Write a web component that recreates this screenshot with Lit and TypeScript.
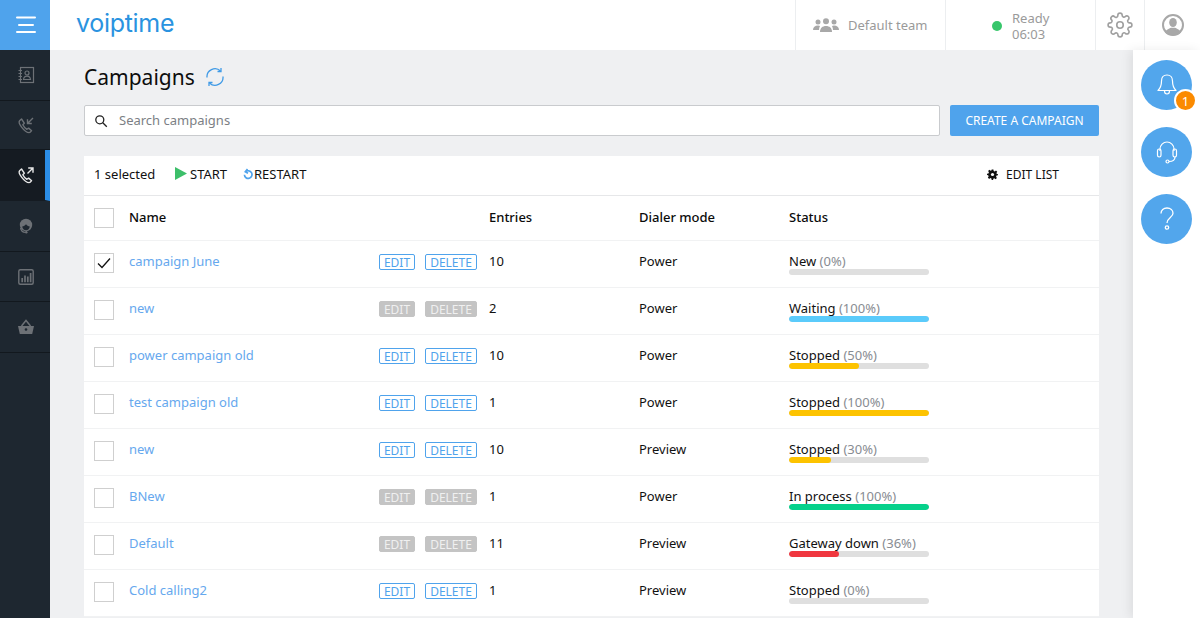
import { LitElement, html, css, svg } from "lit";
import { customElement } from "lit/decorators.js";

type Row = { name: string; on: boolean; sel?: boolean; entries: string; mode: string; status: string; pct: number; color: string };
const ROWS: Row[] = [
  { name: "campaign June", on: true, sel: true, entries: "10", mode: "Power", status: "New", pct: 0, color: "#ddd" },
  { name: "new", on: false, entries: "2", mode: "Power", status: "Waiting", pct: 100, color: "#5bcbfb" },
  { name: "power campaign old", on: true, entries: "10", mode: "Power", status: "Stopped", pct: 50, color: "#fdc300" },
  { name: "test campaign old", on: true, entries: "1", mode: "Power", status: "Stopped", pct: 100, color: "#fdc300" },
  { name: "new", on: true, entries: "10", mode: "Preview", status: "Stopped", pct: 30, color: "#fdc300" },
  { name: "BNew", on: false, entries: "1", mode: "Power", status: "In process", pct: 100, color: "#06d18b" },
  { name: "Default", on: false, entries: "11", mode: "Preview", status: "Gateway down", pct: 36, color: "#f0373f" },
  { name: "Cold calling2", on: true, entries: "1", mode: "Preview", status: "Stopped", pct: 0, color: "#ddd" },
];

const phone = svg`<path d="M4.500 3 2.600 4.700c-.9 1-.4 3.300 2 6.400 2.500 3.300 5.600 5.500 7.500 5.500 1 0 1.800-.9 2.500-1.900l-3-2.600-1.700 1.200C8.300 12.300 6.800 10.700 5.800 8.700l1.500-1.500z" fill="none" stroke="currentColor" stroke-width="1.400" stroke-linejoin="round"/>`;

const NAV = [
  svg`<svg viewBox="0 0 18 18" width="18" height="18" fill="none" stroke="currentColor" stroke-width="1.200"><rect x="3.500" y="1.500" width="13" height="15"/><path d="M1.500 4.500h3.500M1.500 7.500h3.500M1.500 10.500h3.500M1.500 13.500h3.500"/><circle cx="10" cy="7" r="2"/><path d="M6.500 13.500c.3-2.500 1.700-3.300 3.500-3.300s3.200.8 3.500 3.300z"/></svg>`,
  svg`<svg viewBox="0 0 18 18" width="18" height="18">${phone}<path d="M16 2 10.500 7.500M10.500 3.200v4.300h4.300" fill="none" stroke="currentColor" stroke-width="1.400"/></svg>`,
  svg`<svg viewBox="0 0 18 18" width="18" height="18">${phone}<path d="M10.500 7.500 16 2M11.200 2H16v4.800" fill="none" stroke="currentColor" stroke-width="1.400"/></svg>`,
  svg`<svg viewBox="0 0 18 18" width="18" height="18"><circle cx="9" cy="8" r="6.200" fill="currentColor"/><path d="M5.200 9.500c1.500 0 3-1 3.800-2.200.8 1.200 2.200 2.200 3.800 2.200-.3 2.400-1.800 3.800-3.800 3.800s-3.500-1.400-3.800-3.800z" fill="#1e2730"/><path d="M3.500 11c.6 2.700 2.500 4.400 5 4.400" fill="none" stroke="currentColor" stroke-width="1.200"/><circle cx="9.300" cy="15.300" r="1.200" fill="currentColor"/></svg>`,
  svg`<svg viewBox="0 0 18 18" width="18" height="18" fill="none" stroke="currentColor"><rect x="1.800" y="1.800" width="14.400" height="14.400" rx="1.500" stroke-width="1.400"/><path d="M5.200 14.200V10M8 14.200V7.500M10.800 14.200V8.500M13.600 14.200V5" stroke-width="1.700"/></svg>`,
  svg`<svg viewBox="0 0 18 18" width="18" height="18"><path d="M1 8h16l-1.800 8H2.800z" fill="currentColor"/><path d="M4.500 8 9 2.500 13.500 8" fill="none" stroke="currentColor" stroke-width="1.500"/><circle cx="9" cy="11.500" r="1.300" fill="#1e2730"/></svg>`,
];
const NAV_H = [51, 49, 51, 51, 50, 51];

@customElement("app-root")
export class AppRoot extends LitElement {
  static styles = css`
    :host { display: block; height: 100vh; overflow: hidden; background: #eff0f2; font-family: "Noto Sans", "Open Sans", sans-serif; font-size: 13px; color: #111; }
    .app { display: grid; grid-template-columns: 50px 1fr; grid-template-rows: 50px 1fr; height: 618px; overflow: hidden; }
    .burger { background: #4fa3ec; display: flex; align-items: center; justify-content: center; padding-left: 2px; }
    .top { background: #fff; display: flex; align-items: stretch; box-sizing: border-box; }
    .logo { font-family: Inter, sans-serif; font-weight: 400; font-size: 25px; line-height: 47px; color: #2a93e0; margin-left: 26px; margin-right: auto; letter-spacing: -.3px; }
    .cell { display: flex; align-items: center; border-left: 1px solid #eceef0; color: #9a9a9a; box-sizing: border-box; }
    .team { width: 150px; padding-left: 17px; gap: 9px; }
    .ready { width: 150px; padding-left: 46px; gap: 10px; line-height: 16px; }
    .rtext { padding-top: 2px; }
    .dot { width: 10px; height: 10px; border-radius: 50%; background: #37c66b; margin-top: 1px; }
    .gear { width: 49px; justify-content: center; }
    .user { width: 56px; justify-content: center; }
    .side { background: #1e2730; display: flex; flex-direction: column; }
    .nav { box-sizing: border-box; flex: none; border-bottom: 1px solid #12181e; display: flex; align-items: center; justify-content: center; color: #6d7176; padding-left: 2px; }
    .nav.active { background: #151b22; color: #e8e8e8; border-right: 5px solid #2b8de6; padding-left: 7px; border-bottom-color: #151b22; }
    .body { display: grid; grid-template-columns: 1fr 67px; min-height: 0; }
    .main { padding: 13px 34px 0; min-width: 0; overflow: hidden; }
    .title { display: flex; align-items: center; gap: 10px; height: 28px; font-size: 21px; color: #0d0d0d; line-height: 28px; }
    .tools { display: flex; gap: 10px; margin-top: 14px; }
    .search { flex: 1; height: 31px; box-sizing: border-box; background: #fff; border: 1px solid #c9cbce; border-radius: 2px; display: flex; align-items: center; gap: 11px; padding: 0 0 2px 9px; color: #7c7f85; }
    .create { width: 149px; height: 31px; background: #4fa3ec; color: #fff; border-radius: 2px; display: flex; align-items: center; justify-content: center; font-size: 12px; }
    .card { background: #fff; margin-top: 20px; }
    .bar { height: 40px; box-sizing: border-box; border-bottom: 1px solid #e6e7e9; display: flex; align-items: center; padding-left: 10px; padding-bottom: 2px; color: #111; font-size: 13px; }
    .sel { width: 81px; padding-bottom: 2px; }
    .act { display: flex; align-items: center; }
    .start { width: 68px; gap: 3px; padding-bottom: 2px; }
    .restart { gap: 1px; padding-bottom: 2px; }
    .editlist { margin-left: auto; margin-right: 40px; gap: 8px; font-size: 12px; }
    .row { display: grid; grid-template-columns: 35px 250px 110px 150px 150px 1fr; align-items: center; padding: 0 0 2px 10px; box-sizing: border-box; height: 47px; border-bottom: 1px solid #f1f2f3; }
    .row.head { height: 45px; padding-bottom: 1px; font-weight: 500; color: #0b0b0b; }
    .head .lbl { position: relative; top: -1px; }
    .box { width: 20px; height: 20px; box-sizing: border-box; border: 1px solid #cfcfcf; display: flex; align-items: center; justify-content: center; background: #fff; }
    .name { color: #66a8ee; position: relative; top: -2px; }
    .btns { display: flex; gap: 10px; position: relative; top: -1px; }
    .btn { height: 16px; box-sizing: border-box; border: 1px solid #4fa3ec; border-radius: 2px; color: #4fa3ec; font-size: 12px; line-height: 14px; display: flex; align-items: center; justify-content: center; padding-top: 2px; }
    .btn.off { background: #c4c4c4; border-color: #c4c4c4; color: #f0f0f0; }
    .b1 { width: 36px; }
    .b2 { width: 52px; }
    .cellv { position: relative; top: -2px; }
    .st { width: 140px; }
    .st-l { line-height: 20px; margin-bottom: -2px; white-space: nowrap; }
    .st-l span { color: #888c92; }
    .track { height: 6px; border-radius: 3px; background: #dfdfdf; overflow: hidden; }
    .fill { height: 100%; border-radius: 3px; }
    .right { background: #fff; box-shadow: -3px 0 10px rgba(0,0,0,.08); display: flex; flex-direction: column; align-items: center; padding-top: 10px; gap: 17px; position: relative; box-sizing: border-box; }
    .circle { width: 51px; height: 50px; flex: none; border-radius: 50%; background: #52a6ec; display: flex; align-items: center; justify-content: center; position: relative; color: #fff; }
    .badge { position: absolute; right: -5px; bottom: -2px; width: 23px; height: 23px; box-sizing: border-box; border-radius: 50%; background: #fb8a00; border: 2px solid #fff; color: #fff; font-size: 13px; display: flex; align-items: center; justify-content: center; }
  `;

  private row(r: Row) {
    return html`<div class="row">
      <div class="box">${r.sel ? html`<svg width="14" height="12" viewBox="0 0 14 12" fill="none" stroke="#111" stroke-width="1.300"><path d="M1 6.500 5 10.500 13 1.500"/></svg>` : ""}</div>
      <div class="name">${r.name}</div>
      <div class="btns"><div class="btn b1 ${r.on ? "" : "off"}">EDIT</div><div class="btn b2 ${r.on ? "" : "off"}">DELETE</div></div>
      <div class="cellv">${r.entries}</div>
      <div class="cellv">${r.mode}</div>
      <div class="st"><div class="st-l">${r.status} <span>(${r.pct}%)</span></div>
        <div class="track"><div class="fill" style="width:${r.pct}%;background:${r.color}"></div></div></div>
    </div>`;
  }

  render() {
    return html`<div class="app">
      <div class="burger"><svg width="20" height="18" viewBox="0 0 20 18" fill="none" stroke="#fff" stroke-width="2" stroke-linecap="round"><path d="M1 1.500h18M3 9h14M1 16h18"/></svg></div>
      <div class="top">
        <div class="logo">voiptime</div>
        <div class="cell team"><svg width="26" height="14" viewBox="0 0 26 14" fill="#a8a8a8"><circle cx="5" cy="4" r="2.500"/><circle cx="13" cy="3.200" r="3"/><circle cx="21" cy="4" r="2.500"/><path d="M0 12c0-3 2-4.500 5-4.500 1 0 1.500.2 2 .5-.7 1.200-1 2.500-1 4z"/><path d="M7 14c0-4 2.500-6 6-6s6 2 6 6z"/><path d="M26 12c0-3-2-4.500-5-4.500-1 0-1.500.2-2 .5.700 1.200 1 2.500 1 4z"/></svg><span>Default team</span></div>
        <div class="cell ready"><div class="dot"></div><div class="rtext">Ready<br />06:03</div></div>
        <div class="cell gear"><svg width="26" height="26" viewBox="0 0 24 24" fill="none" stroke="#a0a0a0" stroke-width="1.500" stroke-linejoin="round"><circle cx="12" cy="12" r="3"/><path d="M19.400 15a1.650 1.650 0 0 0 .33 1.820l.06.06a2 2 0 1 1-2.830 2.830l-.06-.06a1.650 1.650 0 0 0-2.820 1.170V21a2 2 0 0 1-4 0v-.09A1.650 1.650 0 0 0 7.270 19.740l-.06.06a2 2 0 1 1-2.830-2.830l.06-.06A1.650 1.650 0 0 0 3.270 14H3a2 2 0 0 1 0-4h.09A1.650 1.650 0 0 0 4.260 7.270l-.06-.06a2 2 0 1 1 2.830-2.830l.06.06A1.650 1.650 0 0 0 10 3.270V3a2 2 0 0 1 4 0v.09a1.650 1.650 0 0 0 2.820 1.170l.06-.06a2 2 0 1 1 2.830 2.830l-.06.06A1.650 1.650 0 0 0 20.910 10H21a2 2 0 0 1 0 4h-.09a1.650 1.650 0 0 0-1.510 1z"/></svg></div>
        <div class="cell user"><svg width="22" height="22" viewBox="0 0 22 22"><circle cx="11" cy="11" r="10" fill="none" stroke="#a8a8a8" stroke-width="2"/><ellipse cx="11" cy="8.500" rx="3.800" ry="4.600" fill="#a8a8a8"/><path d="M3 18.500c.8-3 4-3.800 6-4.800h4c2 1 5.200 1.800 6 4.800-2 2-4.800 3-8 3s-6-1-8-3z" fill="#a8a8a8"/></svg></div>
      </div>
      <div class="side">
        ${NAV.map((n, i) => html`<div class="nav ${i === 2 ? "active" : ""}" style="height:${NAV_H[i]}px">${n}</div>`)}
      </div>
      <div class="body">
        <div class="main">
          <div class="title"><span>Campaigns</span>
            <svg width="20" height="20" viewBox="0 0 20 20" fill="none" stroke="#3f9ae6" stroke-width="1.300"><path d="M2 10.500A8 8 0 0 1 15.500 4M18 9.500A8 8 0 0 1 4.500 16"/><path d="M16 1v3.500h-3.500M4 19v-3.500h3.500"/></svg>
          </div>
          <div class="tools">
            <div class="search"><svg width="14" height="14" viewBox="0 0 14 14" fill="none" stroke="#222" stroke-width="1.300" style="margin-top:2px"><circle cx="5.800" cy="5.800" r="4"/><path d="m8.800 8.800 4 4"/></svg><span>Search campaigns</span></div>
            <div class="create">CREATE A CAMPAIGN</div>
          </div>
          <div class="card">
            <div class="bar">
              <div class="sel">1 selected</div>
              <div class="act start"><svg width="12" height="13" viewBox="0 0 12 13"><path d="M0 0 12 6.500 0 13z" fill="#3dbf6a"/></svg>START</div>
              <div class="act restart"><svg width="10" height="12" viewBox="0 0 10 12" fill="none" stroke="#4fa3ec" stroke-width="1.700"><path d="M2.600 3.800a3.800 3.800 0 1 1-1.200 3M4.500 1 2.300 3.700 5 5.300"/></svg>RESTART</div>
              <div class="act editlist"><svg width="11" height="11" viewBox="0 0 24 24"><path d="M10 1h4l.6 3.200 2.300 1 2.700-1.800 2.800 2.800-1.800 2.700 1 2.300L24 10.800v3l-3.200.6-1 2.300 1.800 2.700-2.800 2.800-2.700-1.800-2.300 1L13.200 24h-3l-.6-3.200-2.300-1-2.700 1.800-2.800-2.800 1.800-2.700-1-2.300L0 13.200v-3l3.200-.6 1-2.300L2.400 4.600l2.800-2.800 2.700 1.800 2.300-1z" fill="#111"/><circle cx="12" cy="12" r="3.500" fill="#fff"/></svg>EDIT LIST</div>
            </div>
            <div class="row head"><div class="box"></div><div class="lbl">Name</div><div></div><div class="lbl">Entries</div><div class="lbl">Dialer mode</div><div class="lbl">Status</div></div>
            ${ROWS.map((r) => this.row(r))}
          </div>
        </div>
        <div class="right">
          <div class="circle"><svg width="22" height="24" viewBox="0 0 22 24" fill="none" stroke="#fff" stroke-width="1.200" stroke-linejoin="round"><path d="M11 2c-3.500 0-5.500 2.500-5.500 6 0 4-1 7-3.500 9.500h18C17.500 15 16.500 12 16.500 8c0-3.500-2-6-5.500-6z"/><path d="M8.500 18c0 2 1 3 2.500 3s2.500-1 2.500-3"/></svg><div class="badge">1</div></div>
          <div class="circle"><svg width="24" height="26" viewBox="0 0 24 26" fill="none" stroke="#fff" stroke-width="1.200"><path d="M5 12V10a7 7 0 0 1 14 0v2"/><rect x="2.500" y="10" width="3.500" height="8" rx="1.700"/><rect x="18" y="10" width="3.500" height="8" rx="1.700"/><path d="M20 18c0 3-2 4.500-6 4.500"/><circle cx="12.500" cy="22.500" r="1.500"/></svg></div>
          <div class="circle"><svg width="18" height="26" viewBox="0 0 18 26" fill="none" stroke="#fff" stroke-width="1.300"><path d="M3 7.500C3 4 5.500 2 9 2s6 2.200 6 5.300c0 4-6 4.500-6 9.700"/><circle cx="9" cy="21.500" r="1.700"/></svg></div>
        </div>
      </div>
    </div>`;
  }
}
